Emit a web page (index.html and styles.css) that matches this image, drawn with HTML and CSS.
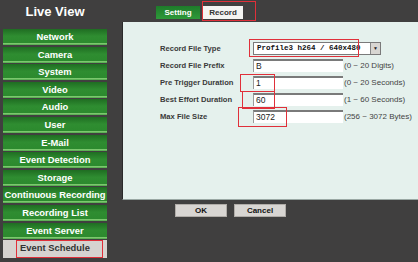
FILE: index.html
```html
<!DOCTYPE html>
<html lang="en">

<head>
    <meta charset="UTF-8">
    <title>Live View - Record</title>
    <link rel="stylesheet" href="styles.css">
</head>

<body>
    <div class="page">
        <div class="sidebar">
            <div class="title">Live View</div>
            <ul class="menu">
                <li>Network</li>
                <li>Camera</li>
                <li>System</li>
                <li>Video</li>
                <li>Audio</li>
                <li>User</li>
                <li>E-Mail</li>
                <li>Event Detection</li>
                <li>Storage</li>
                <li>Continuous Recording</li>
                <li>Recording List</li>
                <li>Event Server</li>
                <li class="active">Event Schedule<span class="mark mark-menu"></span></li>
            </ul>
        </div>

        <div class="main">
            <div class="tabs">
                <div class="tab tab-green">Setting</div>
                <div class="tab tab-white">Record<span class="mark mark-tab"></span></div>
            </div>

            <div class="panel">
                <div class="form">
                    <label>Record File Type</label>
                    <div class="field">
                        <div class="select">
                            <span class="select-text">Profile3 h264 / 640x480</span>
                            <span class="select-arrow">&#9660;</span>
                        </div>
                        <span class="mark mark-select"></span>
                    </div>
                    <span></span>

                    <label>Record File Prefix</label>
                    <div class="field"><div class="input">B</div></div>
                    <span class="hint">(0 ~ 20 Digits)</span>

                    <label>Pre Trigger Duration</label>
                    <div class="field"><div class="input">1</div><span class="mark mark-pre"></span></div>
                    <span class="hint">(0 ~ 20 Seconds)</span>

                    <label>Best Effort Duration</label>
                    <div class="field"><div class="input">60</div><span class="mark mark-best"></span></div>
                    <span class="hint">(1 ~ 60 Seconds)</span>

                    <label>Max File Size</label>
                    <div class="field"><div class="input">3072</div><span class="mark mark-max"></span></div>
                    <span class="hint">(256 ~ 3072 Bytes)</span>
                </div>
            </div>

            <div class="buttons">
                <button>OK</button>
                <button>Cancel</button>
            </div>
        </div>
    </div>
</body>

</html>
```

FILE: styles.css
```css
body {
    margin: 0;
    background-color: #403f3f;
    font-family: "Liberation Sans", Arial, sans-serif;
}

.page {
    display: flex;
    width: 418px;
    height: 262px;
    overflow: hidden;
}

.sidebar {
    width: 104px;
    padding-left: 3px;
    margin-right: 15px;
}

.title {
    height: 29px;
    line-height: 24px;
    text-align: center;
    color: #fff;
    font-weight: bold;
    font-size: 13px;
}

.menu {
    list-style: none;
    margin: 0;
    padding: 0;
}

.menu li {
    position: relative;
    height: 16px;
    line-height: 15px;
    margin-bottom: 1.6px;
    text-align: center;
    color: #fff;
    font-weight: bold;
    font-size: 9.4px;
    white-space: nowrap;
    background: linear-gradient(#1f6d22, #2f8d31 45%, #2c8a2e 85%, #8fd67e 92%, #3d9a3b);
}

.menu li.active {
    background: #d6d3d0;
    color: #333;
    height: 18px;
    line-height: 16px;
}

.mark {
    position: absolute;
    border: 1px solid #e0303a;
    pointer-events: none;
}

.mark-menu {
    left: 13px;
    top: 0;
    width: 85px;
    height: 16px;
}

.main {
    flex: 1;
    display: flex;
    flex-direction: column;
}

.tabs {
    display: flex;
    height: 22px;
    align-items: flex-end;
    padding-left: 34px;
    gap: 3px;
}

.tab {
    position: relative;
    height: 13px;
    line-height: 13px;
    margin-bottom: 3px;
    font-size: 8px;
    font-weight: bold;
    text-align: center;
}

.tab-green {
    width: 44px;
    background: linear-gradient(#1e7a2a, #2e9a3a);
    color: #fff;
}

.tab-white {
    width: 40px;
    background: #f4f4f2;
    color: #333;
}

.mark-tab {
    left: -1px;
    top: -5px;
    width: 52px;
    height: 18px;
}

.panel {
    height: 177px;
    background-color: #e5f1ed;
    border-left: 1px solid #2a2a2a;
    border-bottom: 1px solid #9aa8a4;
}

.form {
    display: grid;
    grid-template-columns: 93px 90px auto;
    grid-auto-rows: 17px;
    align-items: center;
    padding: 18px 0 0 37px;
}

.form label {
    font-size: 7.6px;
    font-weight: bold;
    color: #3a3a3a;
    white-space: nowrap;
}

.field {
    position: relative;
    height: 13px;
}

.input {
    height: 11px;
    line-height: 11px;
    background: #fff;
    border-top: 2px solid #7a7a7a;
    border-left: 1px solid #9a9a9a;
    padding-left: 2px;
    font-size: 8.5px;
    color: #222;
}

.select {
    display: flex;
    width: 126px;
    height: 11px;
    background: #fff;
    border: 1px solid #7a7a7a;
}

.select-text {
    flex: 1;
    padding-left: 3px;
    font-family: "Liberation Mono", "Courier New", monospace;
    font-weight: bold;
    font-size: 7.5px;
    line-height: 11px;
    color: #111;
}

.select-arrow {
    width: 9px;
    background: #d8d6d2;
    border-left: 1px solid #888;
    font-size: 5px;
    line-height: 11px;
    text-align: center;
    color: #222;
}

.mark-select {
    left: -4px;
    top: -3px;
    width: 108px;
    height: 16px;
}

.mark-pre {
    left: -13px;
    top: -2px;
    width: 33px;
    height: 16px;
}

.mark-best {
    left: -11px;
    top: -2px;
    width: 31px;
    height: 16px;
}

.mark-max {
    left: -15px;
    top: -3px;
    width: 47px;
    height: 18px;
}

.hint {
    padding-left: 1px;
    font-size: 8px;
    color: #444;
    white-space: nowrap;
}

.buttons {
    display: flex;
    gap: 7px;
    padding: 4px 0 0 53px;
}

.buttons button {
    width: 52px;
    height: 13px;
    padding: 0;
    border: 1px solid #b0aca8;
    background: #d8d5d2;
    color: #111;
    font-family: "Liberation Sans", Arial, sans-serif;
    font-weight: bold;
    font-size: 8px;
}
```
